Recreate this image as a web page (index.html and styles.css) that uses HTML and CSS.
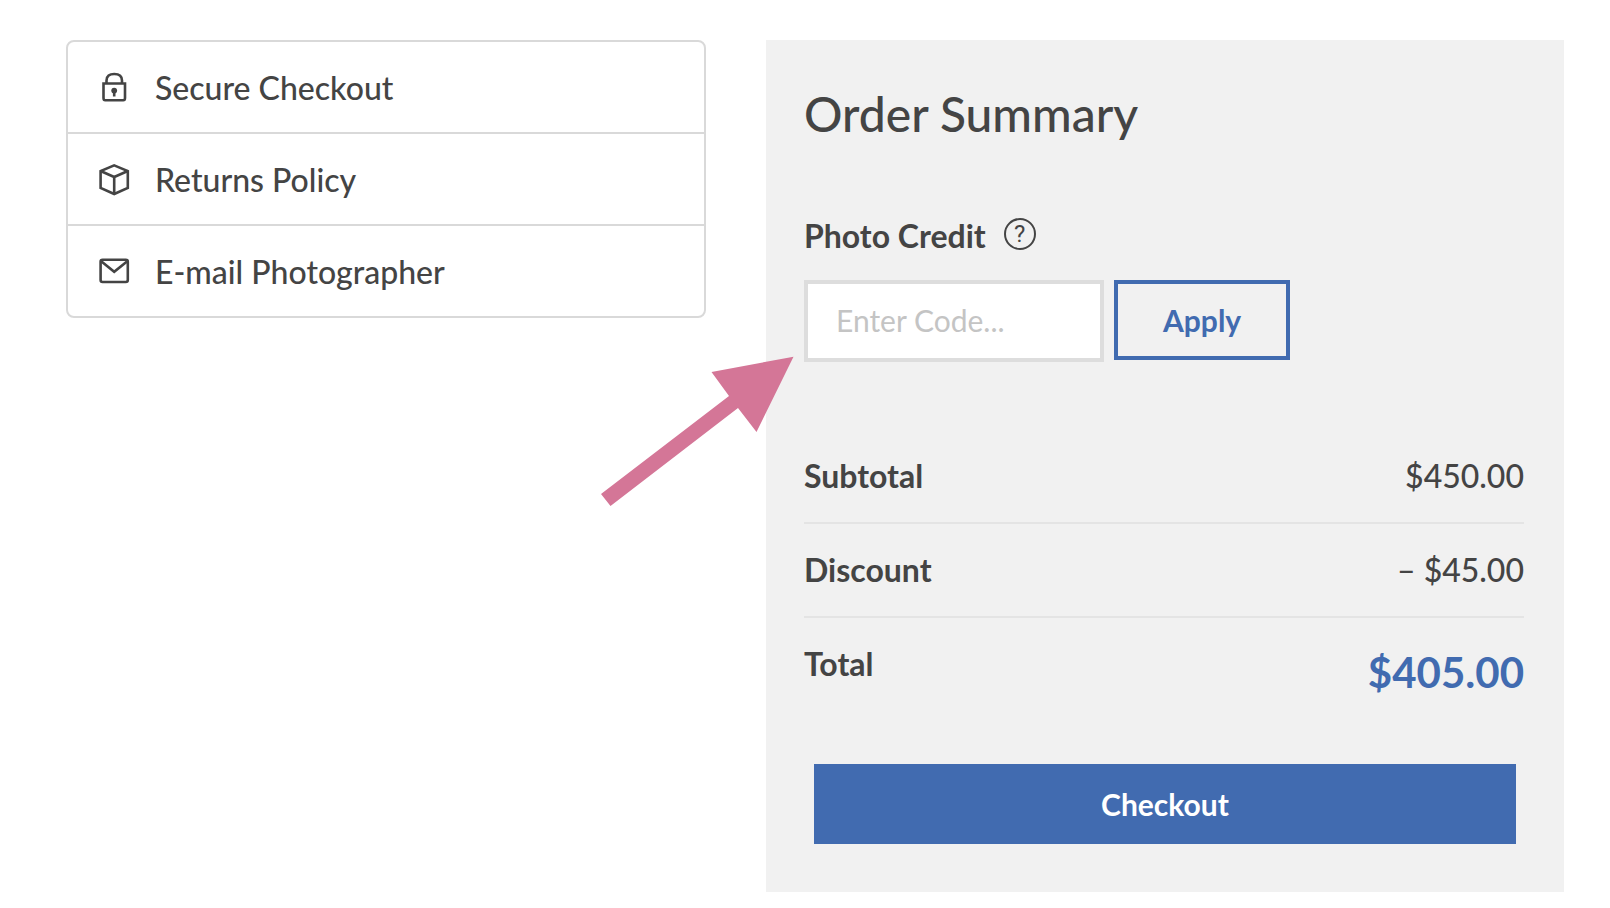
FILE: index.html
```html
<!DOCTYPE html>
<html lang="en">
<head>
    <meta charset="UTF-8">
    <meta name="viewport" content="width=device-width, initial-scale=1.0">
    <title>Order Summary</title>
    <link rel="stylesheet" href="styles.css">
</head>
<body>
    <main class="cart">
        <nav class="info-links">
            <ul>
                <li>
                    <a href="#secure">
                        <svg class="icon" viewBox="0 1 32 32" aria-hidden="true">
                            <path d="M8.500 12V9.500C8.500 5 11.500 3 16.200 3S24 5 24 9.500V12"/>
                            <path d="M5.500 12.500H27V27C27 28.500 26.500 29.200 25.200 29.200H7.200C6 29.200 5.500 28.500 5.500 27Z"/>
                            <circle class="fill" cx="16.200" cy="19.600" r="2.900"/>
                            <path d="M16.200 20V25.500"/>
                        </svg>
                        <span>Secure Checkout</span>
                    </a>
                </li>
                <li>
                    <a href="#returns">
                        <svg class="icon" viewBox="0 1 32 32" aria-hidden="true">
                            <path d="M16.200 2.400L29.800 8V25L16.200 31L2.600 25V8Z"/>
                            <path d="M2.600 8L16.200 14L29.800 8M16.200 14V31"/>
                        </svg>
                        <span>Returns Policy</span>
                    </a>
                </li>
                <li>
                    <a href="#email">
                        <svg class="icon" viewBox="0 1 32 32" aria-hidden="true">
                            <rect x="2.600" y="4.800" width="27.200" height="22.200" rx="2"/>
                            <path d="M3.500 6.500L16.200 16.800L29 6.500"/>
                        </svg>
                        <span>E-mail Photographer</span>
                    </a>
                </li>
            </ul>
        </nav>

        <section class="summary">
            <h1>Order Summary</h1>

            <form class="credit">
                <div class="credit-title">
                    <label for="code">Photo Credit</label>
                    <button type="button" class="help" aria-label="What is a photo credit?">?</button>
                </div>
                <div class="credit-row">
                    <input type="text" id="code" placeholder="Enter Code...">
                    <button type="button" class="apply">Apply</button>
                    <svg class="arrow" viewBox="0 0 194 152" aria-hidden="true">
                        <path d="M192.500 .700L110.500 16L128 40L0 138L9.500 150L137 52L155.500 76Z"/>
                    </svg>
                </div>
            </form>

            <table class="totals">
                <tr>
                    <th scope="row">Subtotal</th>
                    <td>$450.00</td>
                </tr>
                <tr>
                    <th scope="row">Discount</th>
                    <td>– $45.00</td>
                </tr>
                <tr>
                    <th scope="row">Total</th>
                    <td class="total">$405.00</td>
                </tr>
            </table>

            <button type="button" class="checkout">Checkout</button>
        </section>
    </main>
</body>
</html>
```

FILE: styles.css
```css
/* General */
* {
    box-sizing: border-box;
}

body {
    font-family: Lato, sans-serif;
    font-size: 32px;
    font-weight: 500;
    line-height: 40px;
    margin: 0;
    color: #444;
    background-color: #fff;
}

input,
button {
    font-family: inherit;
    font-size: 30px;
    line-height: 40px;
    margin: 0;
    border-radius: 0;
}

button {
    cursor: pointer;
}

.cart {
    display: grid;
    grid-template-columns: 640fr 798fr;
    gap: 60px;
    align-items: start;
    padding: 40px 46px 16px 66px;
}

/* Info links */
.info-links ul {
    list-style: none;
    margin: 0;
    padding: 0;
    border: 2px solid #d9d9d9;
    border-radius: 8px;
}

.info-links li + li {
    border-top: 2px solid #d9d9d9;
}

.info-links a {
    display: flex;
    align-items: center;
    gap: 25px;
    padding: 26px 30px 24px;
    color: inherit;
    text-decoration: none;
}

.icon {
    width: 32px;
    height: 32px;
    fill: none;
    stroke: #444;
    stroke-width: 2.6;
}

.icon .fill {
    fill: #444;
    stroke: none;
}

/* Order summary */
.summary {
    background-color: #f1f1f1;
    padding: 44px 40px 48px 38px;
}

.summary h1 {
    font-size: 48px;
    font-weight: 500;
    line-height: 60px;
    margin: 0 0 74px;
}

.credit {
    margin-bottom: 68px;
}

.credit-title {
    display: flex;
    align-items: flex-start;
    gap: 18px;
    margin-bottom: 26px;
    font-weight: 700;
    line-height: 36px;
}

.help {
    width: 32px;
    height: 32px;
    padding: 0;
    border: 2px solid #444;
    border-radius: 50%;
    background: none;
    color: #444;
    font-family: Roboto, sans-serif;
    font-size: 24px;
    line-height: 28px;
}

.credit-row {
    position: relative;
    display: flex;
    align-items: flex-start;
    gap: 10px;
}

.credit-row input {
    width: 300px;
    padding: 16px 28px 18px;
    border: 4px solid #ddd;
    background-color: #fff;
    color: #444;
}

.credit-row input::placeholder {
    color: #c4c4c4;
    opacity: 1;
}

.apply {
    padding: 16px 45px;
    border: 4px solid #416bb0;
    background: none;
    color: #416bb0;
    font-weight: 700;
}

/* Points at the code field */
.arrow {
    position: absolute;
    top: 76px;
    left: -203px;
    width: 194px;
    height: 152px;
    fill: #d47697;
    pointer-events: none;
}

/* Totals */
.totals {
    width: 100%;
    border-collapse: collapse;
    margin-bottom: 38px;
}

.totals tr + tr {
    border-top: 2px solid #e4e4e4;
}

.totals th,
.totals td {
    padding: 26px 0;
    text-align: left;
    vertical-align: top;
}

.totals td {
    text-align: right;
}

.totals .total {
    color: #416bb0;
    font-size: 42px;
    font-weight: 700;
    line-height: 56px;
}

.checkout {
    display: block;
    width: calc(100% - 18px);
    margin: 0 8px 0 10px;
    padding: 20px;
    border: none;
    background-color: #416bb0;
    color: #fff;
    font-weight: 700;
}
```
